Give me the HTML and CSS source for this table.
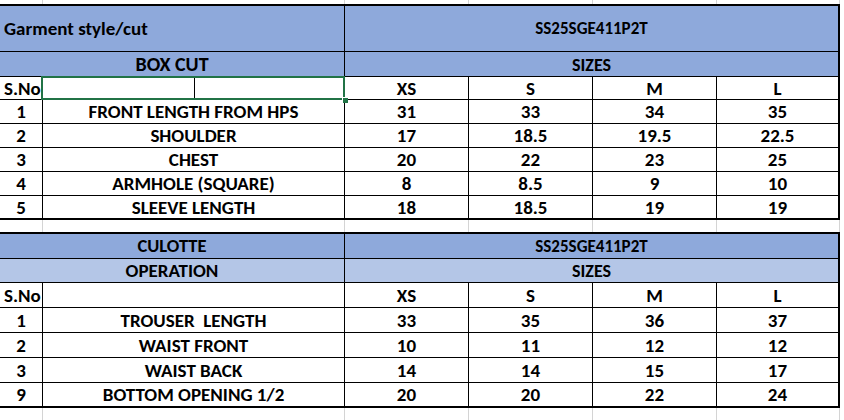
FILE: index.html
```html
<!DOCTYPE html>
<html>
<head>
<meta charset="utf-8">
<link rel="stylesheet" href="styles.css">
</head>
<body>
<div class="sheet">
  <div class="grid g1">
    <div class="c fill left title s3">Garment style/cut</div>
    <div class="c fill s4 code">SS25SGE411P2T</div>
    <div class="c fill s3 big bot">BOX CUT</div>
    <div class="c fill s4 bot sizes">SIZES</div>
    <div class="c left">S.No</div>
    <div class="c"></div>
    <div class="c"></div>
    <div class="c">XS</div>
    <div class="c">S</div>
    <div class="c">M</div>
    <div class="c">L</div>

    <div class="c">1</div><div class="c s2">FRONT LENGTH FROM HPS</div><div class="c">31</div><div class="c">33</div><div class="c">34</div><div class="c">35</div>
    <div class="c">2</div><div class="c s2">SHOULDER</div><div class="c">17</div><div class="c">18.5</div><div class="c">19.5</div><div class="c">22.5</div>
    <div class="c">3</div><div class="c s2">CHEST</div><div class="c">20</div><div class="c">22</div><div class="c">23</div><div class="c">25</div>
    <div class="c">4</div><div class="c s2">ARMHOLE (SQUARE)</div><div class="c">8</div><div class="c">8.5</div><div class="c">9</div><div class="c">10</div>
    <div class="c">5</div><div class="c s2">SLEEVE LENGTH</div><div class="c">18</div><div class="c">18.5</div><div class="c">19</div><div class="c">19</div>

    <div class="selection"><span class="handle"></span></div>
  </div>

  <div class="grid g2">
    <div class="c fill s3 culotte">CULOTTE</div>
    <div class="c fill s4 code">SS25SGE411P2T</div>
    <div class="c light s3">OPERATION</div>
    <div class="c light s4 sizes">SIZES</div>
    <div class="c left">S.No</div>
    <div class="c s2"></div>
    <div class="c">XS</div>
    <div class="c">S</div>
    <div class="c">M</div>
    <div class="c">L</div>

    <div class="c">1</div><div class="c s2">TROUSER&nbsp; LENGTH</div><div class="c">33</div><div class="c">35</div><div class="c">36</div><div class="c">37</div>
    <div class="c">2</div><div class="c s2">WAIST FRONT</div><div class="c">10</div><div class="c">11</div><div class="c">12</div><div class="c">12</div>
    <div class="c">3</div><div class="c s2">WAIST BACK</div><div class="c">14</div><div class="c">14</div><div class="c">15</div><div class="c">17</div>
    <div class="c">9</div><div class="c s2">BOTTOM OPENING 1/2</div><div class="c">20</div><div class="c">20</div><div class="c">22</div><div class="c">24</div>
  </div>
</div>
</body>
</html>
```

FILE: styles.css
```css
html, body {
  margin: 0;
  padding: 0;
  background: #ffffff;
  overflow: hidden;
}

.sheet {
  width: 844px;
  height: 420px;
  padding-top: 4px;
  box-sizing: border-box;
  display: flex;
  flex-direction: column;
  gap: 12px;
  font-family: "Carlito", "Calibri", "Lato", "Liberation Sans", sans-serif;
  font-weight: 700;
  font-size: 19px;
  color: #000;
  background-image: linear-gradient(to right,
    transparent 42px, #d4d4d4 42px, #d4d4d4 43px, transparent 43px,
    transparent 344px, #d4d4d4 344px, #d4d4d4 345px, transparent 345px,
    transparent 468px, #d4d4d4 468px, #d4d4d4 469px, transparent 469px,
    transparent 592px, #d4d4d4 592px, #d4d4d4 593px, transparent 593px,
    transparent 716px, #d4d4d4 716px, #d4d4d4 717px, transparent 717px,
    transparent 839px, #d4d4d4 839px, #d4d4d4 840px, transparent 840px);
}

.grid {
  position: relative;
  display: grid;
  width: max-content;
  grid-template-columns: 42px 151px 149px 123px 123px 123px 121px;
  gap: 1px;
  background: #000;
  border-top: 2px solid #000;
  border-right: 2px solid #000;
  border-bottom: 2px solid #000;
}

.g1 {
  grid-template-rows: 45px 24px 22px 23px 23px 23px 23px 22px;
}

.g2 {
  grid-template-rows: 24px 23px 24px 24px 24px 24px 23px;
}

.c {
  background: #ffffff;
  display: flex;
  align-items: center;
  justify-content: center;
  line-height: 1;
  white-space: nowrap;
  overflow: hidden;
  box-sizing: border-box;
}

.left {
  justify-content: flex-start;
  padding-left: 4px;
}

.bot {
  align-items: flex-end;
  padding-bottom: 2px;
}

.fill {
  background: #8ea9db;
}

.light {
  background: #b4c6e7;
}

.s2 { grid-column: span 2; }
.s3 { grid-column: span 3; }
.s4 { grid-column: span 4; }

.title {
  font-size: 19px;
}

.big {
  font-size: 20px;
}

.code {
  font-size: 17px;
}

.sizes {
  font-size: 18px;
}

.culotte {
  font-size: 18.5px;
}

.selection {
  position: absolute;
  left: 41px;
  top: 70px;
  width: 304px;
  height: 24px;
  border: 2px solid #217346;
  box-sizing: border-box;
}

.handle {
  position: absolute;
  right: -5px;
  bottom: -5px;
  width: 5px;
  height: 5px;
  background: #217346;
  border: 1px solid #ffffff;
  border-right: 0;
  border-bottom: 0;
}
```
